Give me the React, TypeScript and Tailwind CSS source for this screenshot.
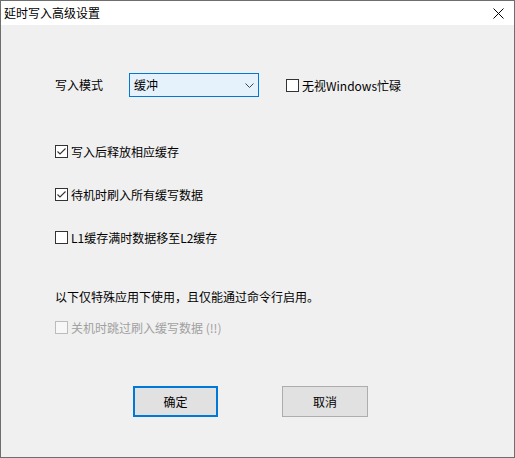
import React from 'react'

function CheckBox({ checked = false, disabled = false }: { checked?: boolean; disabled?: boolean }) {
    return (
        <div
            className={
                disabled
                    ? 'w-[13px] h-[13px] border border-[#bcbcbc] bg-[#f7f7f7] shrink-0'
                    : 'w-[13px] h-[13px] border border-[#333333] bg-white shrink-0 flex items-center justify-center'
            }
        >
            {checked && (
                <svg width="11" height="11" viewBox="0 0 11 11">
                    <path d="M1.5 5.5 L4 8 L9.5 2.5" fill="none" stroke="#333333" strokeWidth="1.1" />
                </svg>
            )}
        </div>
    )
}

function Option({ label, checked = false, disabled = false, className = '' }: { label: string; checked?: boolean; disabled?: boolean; className?: string }) {
    return (
        <div className={'flex items-center h-[13px] ' + className}>
            <CheckBox checked={checked} disabled={disabled} />
            <span className={'ml-[3px] text-[12px] leading-[13px] whitespace-nowrap ' + (disabled ? 'text-[#a0a0a0]' : 'text-black')}>
                {label}
            </span>
        </div>
    )
}

export default function App() {
    return (
        <div
            className="w-[515px] h-[458px] border border-[#6e6e6e] bg-[#f0f0f0] flex flex-col"
            style={{ fontFamily: '"Noto Sans CJK SC", "Noto Sans", sans-serif' }}
        >
            <div className="h-[24px] bg-white flex items-center justify-between pl-[3px] pr-[10px] shrink-0">
                <span className="text-[12px] text-black leading-[16px]">延时写入高级设置</span>
                <svg width="11" height="11" viewBox="0 0 11 11">
                    <path d="M0.5 0.5 L10.5 10.5 M10.5 0.5 L0.5 10.5" stroke="#000" strokeWidth="1" />
                </svg>
            </div>

            <div className="flex flex-col pl-[54px]">
                <div className="flex items-center mt-[48px] h-[24px]">
                    <span className="w-[74px] text-[12px] text-black leading-[16px]">写入模式</span>
                    <div className="w-[130px] h-[24px] border border-[#0078d7] bg-[#e5f1fb] flex items-center justify-between pl-[4px] pr-[4px]">
                        <span className="text-[12px] text-black leading-[16px]">缓冲</span>
                        <svg width="9" height="5" viewBox="0 0 9 5">
                            <path d="M0.5 0.5 L4.5 4.5 L8.5 0.5" fill="none" stroke="#444" strokeWidth="1" />
                        </svg>
                    </div>
                    <div className="ml-[27px]">
                        <Option label="无视Windows忙碌" />
                    </div>
                </div>

                <Option label="写入后释放相应缓存" checked className="mt-[48px]" />
                <Option label="待机时刷入所有缓写数据" checked className="mt-[30px]" />
                <Option label="L1缓存满时数据移至L2缓存" className="mt-[30px]" />

                <div className="mt-[45px] h-[16px] text-[12px] leading-[16px] text-black">
                    以下仅特殊应用下使用，且仅能通过命令行启用。
                </div>
                <Option label="关机时跳过刷入缓写数据 (!!)" disabled className="mt-[16px]" />

                <div className="flex mt-[52px] pl-[78px] gap-[64px]">
                    <div className="w-[85px] h-[31px] border-2 border-[#0078d7] bg-[#e1e1e1] flex items-center justify-center text-[12px] text-black">
                        确定
                    </div>
                    <div className="w-[86px] h-[31px] border border-[#adadad] bg-[#e1e1e1] flex items-center justify-center text-[12px] text-black">
                        取消
                    </div>
                </div>
            </div>
        </div>
    )
}
